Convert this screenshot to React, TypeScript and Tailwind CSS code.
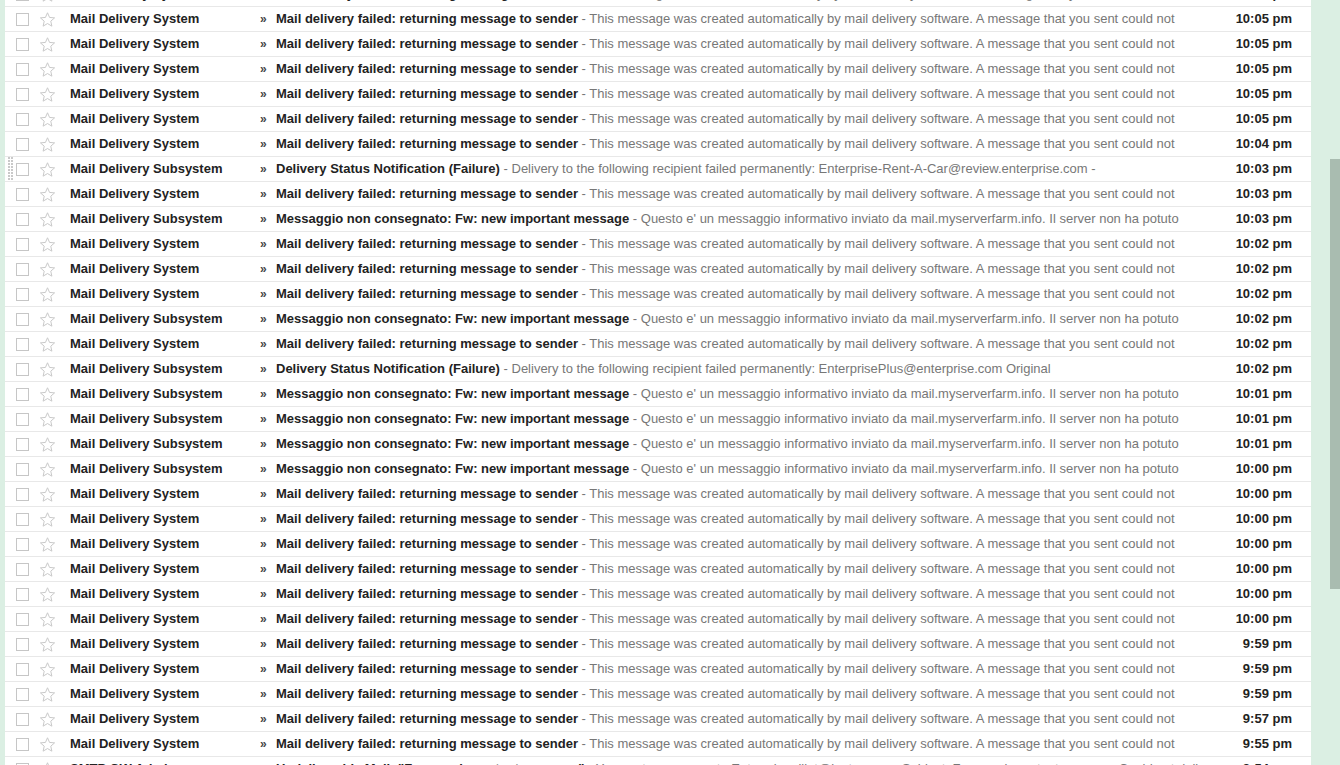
import React from "react";

type Row = { from: string; subject: string; snippet: string; time: string; grip?: boolean };

const FAILED = {
  from: "Mail Delivery System",
  subject: "Mail delivery failed: returning message to sender",
  snippet: "This message was created automatically by mail delivery software. A message that you sent could not",
};
const ITALIAN = {
  from: "Mail Delivery Subsystem",
  subject: "Messaggio non consegnato: Fw: new important message",
  snippet: "Questo e' un messaggio informativo inviato da mail.myserverfarm.info. Il server non ha potuto",
};

const ROWS: Row[] = [
  { ...FAILED, time: "10:05 pm" },
  { ...FAILED, time: "10:05 pm" },
  { ...FAILED, time: "10:05 pm" },
  { ...FAILED, time: "10:05 pm" },
  { ...FAILED, time: "10:05 pm" },
  { ...FAILED, time: "10:04 pm" },
  {
    from: "Mail Delivery Subsystem",
    subject: "Delivery Status Notification (Failure)",
    snippet: "Delivery to the following recipient failed permanently: Enterprise-Rent-A-Car@review.enterprise.com -",
    time: "10:03 pm",
    grip: true,
  },
  { ...FAILED, time: "10:03 pm" },
  { ...ITALIAN, time: "10:03 pm" },
  { ...FAILED, time: "10:02 pm" },
  { ...FAILED, time: "10:02 pm" },
  { ...FAILED, time: "10:02 pm" },
  { ...ITALIAN, time: "10:02 pm" },
  { ...FAILED, time: "10:02 pm" },
  {
    from: "Mail Delivery Subsystem",
    subject: "Delivery Status Notification (Failure)",
    snippet: "Delivery to the following recipient failed permanently: EnterprisePlus@enterprise.com Original",
    time: "10:02 pm",
  },
  { ...ITALIAN, time: "10:01 pm" },
  { ...ITALIAN, time: "10:01 pm" },
  { ...ITALIAN, time: "10:01 pm" },
  { ...ITALIAN, time: "10:00 pm" },
  { ...FAILED, time: "10:00 pm" },
  { ...FAILED, time: "10:00 pm" },
  { ...FAILED, time: "10:00 pm" },
  { ...FAILED, time: "10:00 pm" },
  { ...FAILED, time: "10:00 pm" },
  { ...FAILED, time: "10:00 pm" },
  { ...FAILED, time: "9:59 pm" },
  { ...FAILED, time: "9:59 pm" },
  { ...FAILED, time: "9:59 pm" },
  { ...FAILED, time: "9:57 pm" },
  { ...FAILED, time: "9:55 pm" },
  {
    from: "SMTP GW Admin",
    subject: "Undeliverable Mail: \"Fw: new important message\"",
    snippet: "You sent a message to Enterprise.rillet@ipgtmg.com Subject: Fw: new important message Could not deliver",
    time: "9:54 pm",
  },
];

function Star() {
  return (
    <svg width="17" height="17" viewBox="0 0 24 24" fill="none" stroke="#c8c8c8" strokeWidth="1.4" strokeLinejoin="miter">
      <path d="M12 2.5l2.9 6.6 7.1.6-5.4 4.7 1.6 7-6.2-3.7-6.2 3.7 1.6-7L2 9.7l7.1-.6z" />
    </svg>
  );
}

function Grip() {
  return (
    <svg width="6" height="24" viewBox="0 0 6 24" className="shrink-0">
      {[0, 1, 2, 3, 4, 5, 6, 7].map((r) =>
        [0, 1].map((c) => (
          <rect key={`${r}-${c}`} x={c * 3} y={r * 3} width="2" height="2" fill="#c9c9c9" />
        ))
      )}
    </svg>
  );
}

function MailRow({ row }: { row: Row }) {
  return (
    <div className="flex items-center h-[25px] border-b border-[#e8e8e8] bg-white text-[13px] whitespace-nowrap">
      <div className="w-[11px] shrink-0 flex items-center justify-center">{row.grip && <Grip />}</div>
      <div className="w-[13px] h-[13px] shrink-0 border border-[#c6c6c6] bg-white" />
      <div className="w-[10px] shrink-0" />
      <div className="w-[18px] shrink-0 flex items-center"><Star /></div>
      <div className="w-[13px] shrink-0" />
      <div className="w-[190px] shrink-0 font-bold text-[#222] overflow-hidden">{row.from}</div>
      <div className="w-[16px] shrink-0 text-[#444] font-bold text-[12px]">»</div>
      <div className="flex-1 overflow-hidden text-[#777]">
        <span className="font-bold text-[#222]">{row.subject}</span> - {row.snippet}
      </div>
      <div className="w-[110px] shrink-0 text-right pr-[19px] font-bold text-[#222]">{row.time}</div>
    </div>
  );
}

export default function App() {
  return (
    <div
      className="flex w-[1340px] h-[765px] overflow-hidden bg-[#dbefe3]"
      style={{ fontFamily: "'Liberation Sans', Arial, sans-serif" }}
    >
      <div className="w-[5px] shrink-0" />
      <div className="w-[1306px] shrink-0 overflow-hidden bg-white">
        <div className="-mt-[18px]">
          <MailRow row={{ ...FAILED, time: "10:05 pm" }} />
          {ROWS.map((r, i) => (
            <MailRow key={i} row={r} />
          ))}
        </div>
      </div>
      <div className="flex-1 flex justify-end">
        <div className="w-[10px] h-[430px] mt-[159px] bg-[#a9bcb0]" />
      </div>
    </div>
  );
}
